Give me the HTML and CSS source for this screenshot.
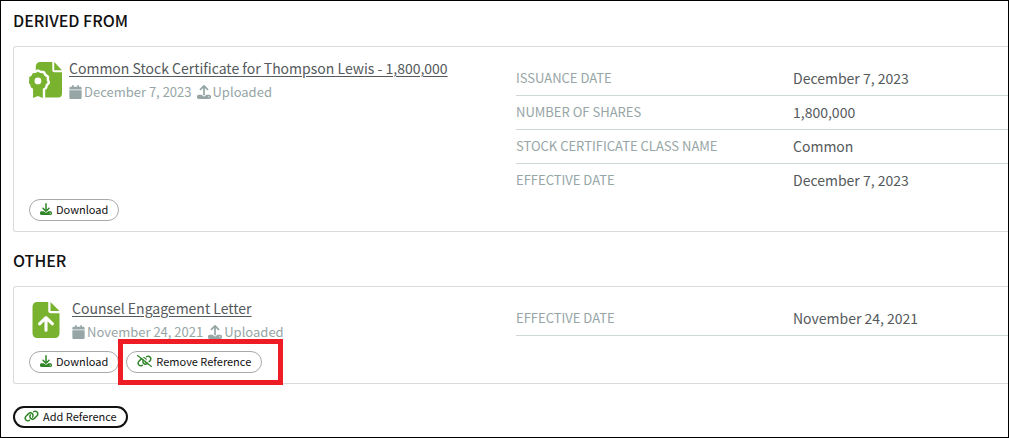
FILE: index.html
```html
<!DOCTYPE html>
<html lang="en">
<head>
<meta charset="utf-8">
<title>Document references</title>
<link rel="stylesheet" href="styles.css">
</head>
<body>
<svg class="sprite" aria-hidden="true">
  <symbol id="calendar" viewBox="0 0 448 512"><path d="M96 32V64H48C21.5 64 0 85.5 0 112v48H448V112c0-26.5-21.5-48-48-48H352V32c0-17.7-14.3-32-32-32s-32 14.3-32 32V64H160V32c0-17.7-14.3-32-32-32S96 14.3 96 32zM448 192H0V464c0 26.5 21.5 48 48 48H400c26.5 0 48-21.5 48-48V192z"/></symbol>
  <symbol id="upload" viewBox="0 0 512 512"><path d="M288 109.3V352c0 17.7-14.3 32-32 32s-32-14.3-32-32V109.3l-73.4 73.4c-12.5 12.5-32.8 12.5-45.3 0s-12.5-32.8 0-45.3l128-128c12.5-12.5 32.8-12.5 45.3 0l128 128c12.5 12.5 12.5 32.8 0 45.3s-32.8 12.5-45.3 0L288 109.3zM64 352H192c0 35.3 28.7 64 64 64s64-28.7 64-64H448c35.3 0 64 28.7 64 64v32c0 35.3-28.7 64-64 64H64c-35.3 0-64-28.7-64-64V416c0-35.3 28.7-64 64-64zM432 456a24 24 0 1 0 0-48 24 24 0 1 0 0 48z"/></symbol>
  <symbol id="download" viewBox="0 0 512 512"><path d="M288 32c0-17.7-14.3-32-32-32s-32 14.3-32 32V274.7l-73.4-73.4c-12.5-12.5-32.8-12.5-45.3 0s-12.5 32.8 0 45.3l128 128c12.5 12.5 32.8 12.5 45.3 0l128-128c12.5-12.5 12.5-32.8 0-45.3s-32.8-12.5-45.3 0L288 274.7V32zM64 352c-35.3 0-64 28.7-64 64v32c0 35.3 28.7 64 64 64H448c35.3 0 64-28.7 64-64V416c0-35.3-28.7-64-64-64H346.5l-45.3 45.3c-25 25-65.5 25-90.5 0L165.5 352H64zm368 56a24 24 0 1 1 0 48 24 24 0 1 1 0-48z"/></symbol>
  <symbol id="link" viewBox="0 0 640 512"><path d="M579.8 267.7c56.5-56.5 56.5-148 0-204.5c-50-50-128.8-56.5-186.3-15.4l-1.6 1.1c-14.4 10.3-17.7 30.3-7.4 44.6s30.3 17.7 44.6 7.4l1.6-1.1c32.1-22.9 76-19.3 103.8 8.6c31.5 31.5 31.5 82.5 0 114L422.3 334.8c-31.5 31.5-82.5 31.5-114 0c-27.9-27.9-31.5-71.8-8.6-103.8l1.1-1.6c10.3-14.4 6.9-34.4-7.4-44.6s-34.4-6.9-44.6 7.4l-1.1 1.6C206.5 251.2 213 330 263 380c56.5 56.5 148 56.5 204.5 0L579.8 267.7zM60.2 244.3c-56.5 56.5-56.5 148 0 204.5c50 50 128.8 56.5 186.3 15.4l1.6-1.1c14.4-10.3 17.7-30.3 7.4-44.6s-30.3-17.7-44.6-7.4l-1.6 1.1c-32.1 22.9-76 19.3-103.8-8.6C74 372 74 321 105.5 289.5L217.7 177.2c31.5-31.5 82.5-31.5 114 0c27.9 27.9 31.5 71.8 8.6 103.9l-1.1 1.6c-10.3 14.4-6.9 34.4 7.4 44.6s34.4 6.9 44.6-7.4l1.1-1.6C433.5 260.8 427 182 377 132c-56.5-56.5-148-56.5-204.5 0L60.2 244.3z"/></symbol>
  <symbol id="unlink" viewBox="0 0 640 512"><use href="#link" width="640" height="512"/><path d="M50 -30L670 456" stroke="#fff" stroke-width="50"/><path d="M24 24L616 488" stroke="currentColor" stroke-width="48" stroke-linecap="round"/></symbol>
  <symbol id="file-upload" viewBox="0 0 384 512"><path d="M64 0C28.700 0 0 28.700 0 64V448c0 35.300 28.700 64 64 64H320c35.300 0 64-28.700 64-64V160H256c-17.700 0-32-14.300-32-32V0H64zM256 0V128H384L256 0z"/><path d="M192 400V235M100 310L192 222L284 310" fill="none" stroke="#fff" stroke-width="44" stroke-linecap="round" stroke-linejoin="round"/></symbol>
  <symbol id="file-certificate" viewBox="0 0 34 37">
    <path d="M11.500 0H24v8.500a2 2 0 0 0 2 2h8V32.500a4 4 0 0 1-4 4H7V4.500a4.500 4.500 0 0 1 4.500-4.500zM26 0l8 8.500h-8z"/>
    <g stroke="#fff" stroke-width="5" stroke-linejoin="round"><use href="#seal"/></g>
    <use href="#seal"/>
    <circle cx="9.200" cy="19.500" r="3.500" fill="#fff"/>
  </symbol>
  <path id="seal" d="M9.200 10l2.400 1.400 2.900 .1 1.400 2.500 2.400 1.600-.2 2.900 1.100 2.600-2 2.100-.7 2.800-2.300 1.500V37l-5-2-5 2V27.500l-2.300-1.500-.7-2.800-2-2.100 1.100-2.600-.2-2.900 2.400-1.600 1.400-2.500 2.900-.1z"/>
</svg>

<main class="page">
  <section class="section">
    <h2 class="heading">DERIVED FROM</h2>
    <article class="card">
      <div class="summary">
        <header class="document">
          <svg class="document-icon certificate" aria-hidden="true"><use href="#file-certificate"/></svg>
          <div>
            <a class="title" href="#">Common Stock Certificate for Thompson Lewis - 1,800,000</a>
            <div class="meta">
              <span class="meta-item"><svg class="calendar-icon" aria-hidden="true"><use href="#calendar"/></svg>December 7, 2023</span>
              <span class="meta-item"><svg class="upload-icon" aria-hidden="true"><use href="#upload"/></svg>Uploaded</span>
            </div>
          </div>
        </header>
        <dl class="details">
          <div class="detail"><dt>ISSUANCE DATE</dt><dd>December 7, 2023</dd></div>
          <div class="detail"><dt>NUMBER OF SHARES</dt><dd>1,800,000</dd></div>
          <div class="detail"><dt>STOCK CERTIFICATE CLASS NAME</dt><dd>Common</dd></div>
          <div class="detail last"><dt>EFFECTIVE DATE</dt><dd>December 7, 2023</dd></div>
        </dl>
      </div>
      <div class="actions">
        <button class="button" type="button"><svg class="download-icon" aria-hidden="true"><use href="#download"/></svg>Download</button>
      </div>
    </article>
  </section>

  <section class="section">
    <h2 class="heading">OTHER</h2>
    <article class="card">
      <div class="summary">
        <header class="document letter">
          <svg class="document-icon" aria-hidden="true"><use href="#file-upload"/></svg>
          <div>
            <a class="title" href="#">Counsel Engagement Letter</a>
            <div class="meta">
              <span class="meta-item"><svg class="calendar-icon" aria-hidden="true"><use href="#calendar"/></svg>November 24, 2021</span>
              <span class="meta-item"><svg class="upload-icon" aria-hidden="true"><use href="#upload"/></svg>Uploaded</span>
            </div>
          </div>
        </header>
        <dl class="details">
          <div class="detail"><dt>EFFECTIVE DATE</dt><dd>November 24, 2021</dd></div>
        </dl>
      </div>
      <div class="actions">
        <button class="button" type="button"><svg class="download-icon" aria-hidden="true"><use href="#download"/></svg>Download</button>
        <div class="highlighted">
          <button class="button" type="button"><svg class="link-icon" aria-hidden="true"><use href="#unlink"/></svg>Remove Reference</button>
        </div>
      </div>
    </article>
  </section>

  <button class="button add" type="button"><svg class="link-icon" aria-hidden="true"><use href="#link"/></svg>Add Reference</button>
</main>
</body>
</html>
```

FILE: styles.css
```css
* {
  box-sizing: border-box;
}

body {
  margin: 0;
  background: #fff;
  color: #54595c;
  font-family: "Noto Sans CJK SC", "Noto Sans", sans-serif;
  font-size: 14px;
}

svg {
  flex: none;
  fill: currentColor;
}

.sprite {
  position: absolute;
  width: 0;
  height: 0;
}

.page {
  min-height: 100vh;
  padding: 4px 0 9px 12px;
  border: 1px solid #000;
}

.section {
  margin-bottom: 13px;
}

.heading {
  margin: 0 0 10px;
  color: #111;
  font-size: 16px;
  font-weight: 500;
  line-height: 31px;
}

.card {
  padding: 15px 0 10px 15px;
  border: 1px solid #d9dcdc;
  border-right: 0;
  border-radius: 3px 0 0 3px;
}

.summary {
  display: grid;
  grid-template-columns: 487fr 492fr;
  min-height: 48px;
}

.document {
  display: flex;
  align-items: flex-start;
  gap: 7px;
}

.letter {
  gap: 12px;
  padding-left: 3px;
}

.document-icon {
  width: 28px;
  height: 36px;
  color: #78b22f;
}

.certificate {
  width: 33px;
  height: 36px;
}

.title {
  display: block;
  color: #54595c;
  line-height: 12px;
  text-underline-offset: 2px;
}

.meta {
  display: flex;
  gap: 5px;
  margin-top: 8px;
  color: #96a5a6;
  font-size: 13px;
  line-height: 20px;
}

.meta-item {
  display: flex;
  align-items: center;
  gap: 2px;
}

.calendar-icon {
  width: 13px;
  height: 14px;
}

.upload-icon {
  width: 14px;
  height: 14px;
}

.details {
  margin: 0;
}

.detail {
  display: grid;
  grid-template-columns: 277fr 215fr;
  height: 34px;
  border-bottom: 1px solid #ced8d8;
}

.last {
  border-bottom-color: transparent;
}

.detail dt {
  color: #96a5a6;
  font-size: 13px;
  line-height: 31px;
}

.detail dd {
  margin: 0;
  line-height: 32px;
}

.actions {
  display: flex;
  gap: 7px;
  margin-top: 1px;
}

.button {
  display: flex;
  align-items: center;
  gap: 4px;
  height: 22px;
  padding: 0 10px 2px;
  border: 1px solid #a9a9a9;
  border-radius: 11px;
  background: #fff;
  color: #111;
  font-family: inherit;
  font-size: 11px;
  line-height: 18px;
}

.button svg {
  color: #2f8527;
}

.download-icon {
  width: 12px;
  height: 12px;
}

.link-icon {
  width: 15px;
  height: 12px;
}

.highlighted {
  position: relative;
}

.highlighted::after {
  position: absolute;
  inset: -12px -21px -12px -8px;
  border: 5px solid #ee1c24;
  content: "";
  pointer-events: none;
}

.add {
  margin-top: 22px;
  padding: 0 9px 2px;
  border: 2px solid #111;
}
```
